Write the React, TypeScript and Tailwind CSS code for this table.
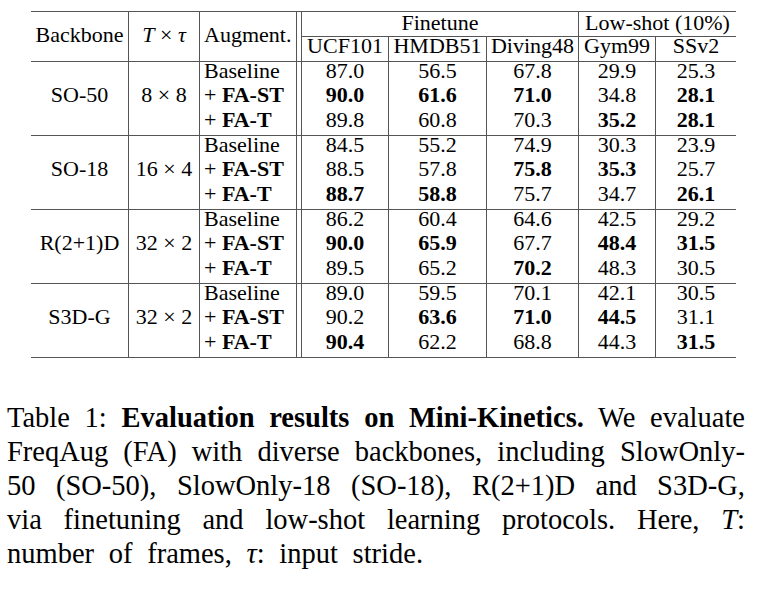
const groups = [
  {
    name: 'SO-50',
    tt: '8 × 8',
    rows: [
      [['87.0'], ['56.5'], ['67.8'], ['29.9'], ['25.3']],
      [['90.0', 1], ['61.6', 1], ['71.0', 1], ['34.8'], ['28.1', 1]],
      [['89.8'], ['60.8'], ['70.3'], ['35.2', 1], ['28.1', 1]],
    ],
  },
  {
    name: 'SO-18',
    tt: '16 × 4',
    rows: [
      [['84.5'], ['55.2'], ['74.9'], ['30.3'], ['23.9']],
      [['88.5'], ['57.8'], ['75.8', 1], ['35.3', 1], ['25.7']],
      [['88.7', 1], ['58.8', 1], ['75.7'], ['34.7'], ['26.1', 1]],
    ],
  },
  {
    name: 'R(2+1)D',
    tt: '32 × 2',
    rows: [
      [['86.2'], ['60.4'], ['64.6'], ['42.5'], ['29.2']],
      [['90.0', 1], ['65.9', 1], ['67.7'], ['48.4', 1], ['31.5', 1]],
      [['89.5'], ['65.2'], ['70.2', 1], ['48.3'], ['30.5']],
    ],
  },
  {
    name: 'S3D-G',
    tt: '32 × 2',
    rows: [
      [['89.0'], ['59.5'], ['70.1'], ['42.1'], ['30.5']],
      [['90.2'], ['63.6', 1], ['71.0', 1], ['44.5', 1], ['31.1']],
      [['90.4', 1], ['62.2'], ['68.8'], ['44.3'], ['31.5', 1]],
    ],
  },
] as { name: string; tt: string; rows: [string, number?][][] }[];

const dataCols = ['w-[87px]', 'w-[98px]', 'w-[92px]', 'w-[77px]', 'w-[80px]'];
const line = 'border-[#555]';

function Row({ children, className = '' }: { children?: React.ReactNode; className?: string }) {
  return <div className={`flex h-[24.33px] items-start leading-[18px] ${className}`}>{children}</div>;
}

export default function App() {
  return (
    <div className="h-[591px] w-[760px] bg-white pt-[11px] text-black [font-family:Liberation_Serif,Times_New_Roman,serif]">
      <div className="ml-[31px] w-[705px] text-[22px]">
        {/* header */}
        <div className={`flex border-t border-b ${line}`}>
          <div className={`flex h-[49px] w-[98px] items-center justify-center border-r pb-[4px] leading-[18px] ${line}`}>
            Backbone
          </div>
          <div className={`flex h-[49px] w-[71px] items-center justify-center border-r pb-[4px] leading-[18px] ${line}`}>
            <i>T</i>&nbsp;×&nbsp;<i>τ</i>
          </div>
          <div className={`flex h-[49px] w-[97px] items-center border-r pb-[4px] pl-[4px] leading-[18px] ${line}`}>
            Augment.
          </div>
          <div className={`w-[5px] border-r ${line}`} />
          <div className={`w-[277px] border-r ${line}`}>
            <div className={`flex h-[25px] justify-center border-b pt-[1px] leading-[20px] ${line}`}>Finetune</div>
            <div className="flex h-[24px] leading-[18px]">
              <div className={`flex w-[87px] justify-center border-r ${line}`}>UCF101</div>
              <div className={`flex w-[98px] justify-center border-r ${line}`}>HMDB51</div>
              <div className="flex w-[91px] justify-center">Diving48</div>
            </div>
          </div>
          <div className="w-[157px]">
            <div className={`flex h-[25px] justify-center border-b pt-[1px] leading-[20px] ${line}`}>Low-shot (10%)</div>
            <div className="flex h-[24px] leading-[18px]">
              <div className={`flex w-[77px] justify-center border-r ${line}`}>Gym99</div>
              <div className="flex w-[80px] justify-center">SSv2</div>
            </div>
          </div>
        </div>

        {/* body */}
        {groups.map((g) => (
          <div key={g.name} className={`flex h-[74px] border-b ${line}`}>
            <div className={`flex w-[98px] flex-col border-r ${line}`}>
              <Row />
              <Row className="justify-center">{g.name}</Row>
            </div>
            <div className={`flex w-[71px] flex-col border-r ${line}`}>
              <Row />
              <Row className="justify-center">{g.tt}</Row>
            </div>
            <div className={`flex w-[97px] flex-col border-r pl-[4px] ${line}`}>
              <Row>Baseline</Row>
              <Row>
                +&nbsp;<b>FA-ST</b>
              </Row>
              <Row>
                +&nbsp;<b>FA-T</b>
              </Row>
            </div>
            <div className={`w-[5px] border-r ${line}`} />
            {dataCols.map((w, c) => (
              <div key={c} className={`flex ${w} flex-col ${c < 4 ? `border-r ${line}` : ''}`}>
                {g.rows.map((r, i) => (
                  <Row key={i} className={`justify-center ${r[c][1] ? 'font-bold' : ''}`}>
                    {r[c][0]}
                  </Row>
                ))}
              </div>
            ))}
          </div>
        ))}
      </div>

      {/* caption */}
      <div className="ml-[7px] mt-[43px] w-[738px] text-[28.5px] leading-[34px]">
        <div className="whitespace-nowrap text-justify [text-align-last:justify]">
          Table 1: <b>Evaluation results on Mini-Kinetics.</b> We evaluate
        </div>
        <div className="whitespace-nowrap text-justify [text-align-last:justify]">
          FreqAug (FA) with diverse backbones, including SlowOnly-
        </div>
        <div className="whitespace-nowrap text-justify [text-align-last:justify]">
          50 (SO-50), SlowOnly-18 (SO-18), R(2+1)D and S3D-G,
        </div>
        <div className="whitespace-nowrap text-justify [text-align-last:justify]">
          via finetuning and low-shot learning protocols. Here, <i>T</i>:
        </div>
        <div className="w-[416px] whitespace-nowrap text-justify [text-align-last:justify]">
          number of frames, <i>τ</i>: input stride.
        </div>
      </div>
    </div>
  );
}
